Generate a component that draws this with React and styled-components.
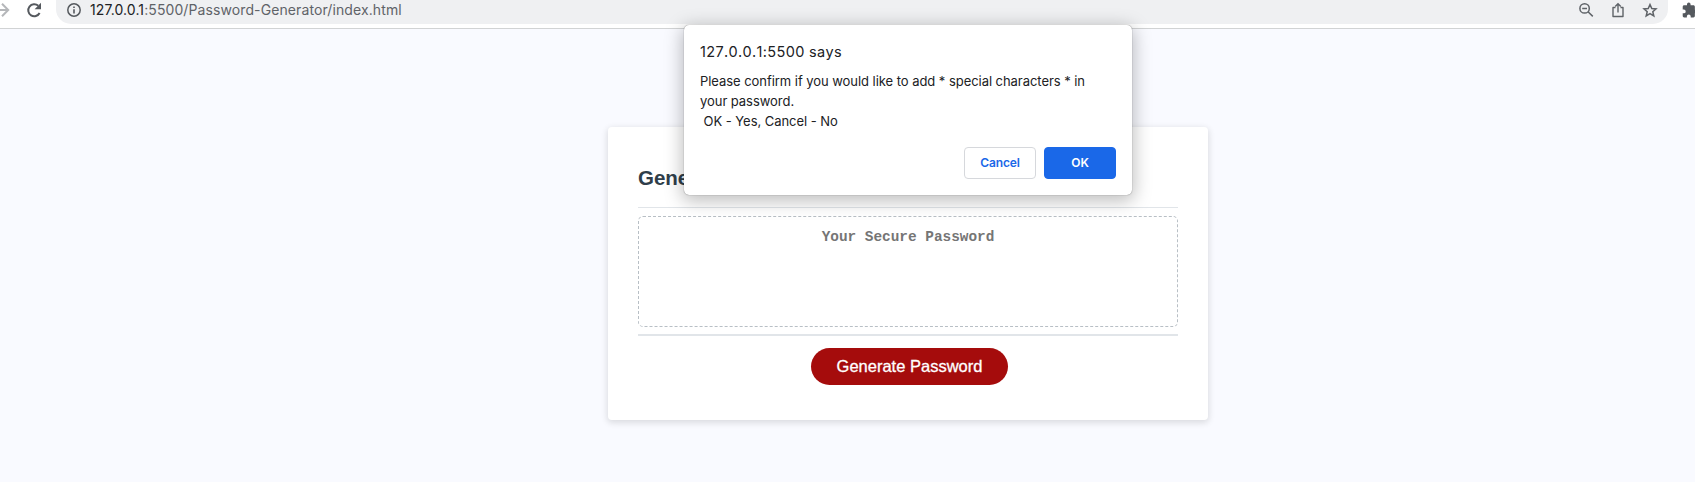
import React from "react";
import styled, { createGlobalStyle } from "styled-components";

const GlobalStyle = createGlobalStyle`
  *, *::before, *::after { box-sizing: border-box; }
  body {
    margin: 0;
    overflow: hidden;
    background: #f9faff;
    font-family: "Liberation Sans", Arial, sans-serif;
  }
`;

const Window = styled.div`
  height: 482px;
  overflow: hidden;
`;

const Toolbar = styled.header`
  display: flex;
  align-items: flex-start;
  height: 29px;
  background: #fff;
  border-bottom: 1px solid #d1d3d4;
`;

const Icon = styled.svg`
  display: block;
  flex: none;
  width: ${(p) => p.$w || 20}px;
  height: 20px;
  overflow: visible;
`;

const NavButtons = styled.nav`
  display: flex;
  gap: 14px;
  width: 56px;
  flex: none;
`;

const AddressBar = styled.div`
  display: flex;
  flex: none;
  align-items: flex-start;
  width: 1612px;
  height: 24px;
  padding: 0 8px;
  background: #eff0f2;
  border-radius: 0 0 15px 15px;
`;

const Url = styled.span`
  flex: 1;
  margin-left: 6px;
  font: 400 14px/20px Inter, sans-serif;
  letter-spacing: 0.1px;
  color: #5f6368;
  white-space: nowrap;
`;

const Host = styled.span`
  color: #202124;
`;

const Actions = styled.div`
  display: flex;
  gap: 12px;
`;

const Extensions = styled.div`
  flex: none;
  width: 13px;
  margin-left: 14px;
  overflow: hidden;
`;

const Page = styled.main`
  display: flex;
  justify-content: center;
  padding: 98px 0 0 121px;
`;

const Card = styled.section`
  width: 600px;
  height: 293px;
  padding: 37px 30px 0;
  background: #fff;
  border-radius: 4px;
  box-shadow: 0 2px 6px 1px rgba(0, 0, 0, 0.12);
`;

const CardTitle = styled.h2`
  margin: 0;
  height: 43px;
  font-size: 20.5px;
  line-height: 27px;
  color: #2f3e4a;
`;

const Divider = styled.div`
  height: ${(p) => p.$size}px;
  background: #e1e5e9;
`;

const PasswordBox = styled.div`
  height: 111px;
  margin: 8px 0 7px;
  padding-top: 11px;
  border: 1px dashed #b8bfc5;
  border-radius: 5px;
  font: 700 14.4px/18px "Liberation Mono", monospace;
  text-align: center;
  color: #757575;
`;

const GenerateButton = styled.button`
  display: block;
  width: 197px;
  height: 37px;
  margin: 12px 0 0 173px;
  padding: 0;
  border: 0;
  border-radius: 19px;
  background: #a50c0c;
  color: #fff;
  font: 400 16.5px/37px "Liberation Sans", Arial, sans-serif;
  -webkit-text-stroke: 0.3px #fff;
`;

const Dialog = styled.div`
  position: absolute;
  left: 684px;
  top: 25px;
  width: 448px;
  height: 170px;
  padding: 16px;
  background: #fff;
  border-radius: 5px;
  box-shadow: 0 0 1px rgba(0, 0, 0, 0.6), 0 4px 18px 2px rgba(0, 0, 0, 0.26);
  font-family: Inter, sans-serif;
  color: #202124;
`;

const DialogTitle = styled.h1`
  margin: 0;
  font-size: 14.5px;
  font-weight: 400;
  font-kerning: none;
  line-height: 22px;
  letter-spacing: 0.35px;
`;

const Message = styled.p`
  margin: 8px 0 0;
  font-size: 13px;
  line-height: 20px;
  letter-spacing: -0.05px;
  white-space: pre;
`;

const DialogActions = styled.div`
  display: flex;
  justify-content: flex-end;
  gap: 8px;
  margin-top: 16px;
`;

const DialogButton = styled.button`
  width: 72px;
  height: 32px;
  padding: 0;
  border: 1px solid ${(p) => (p.$primary ? "#1a68e8" : "#d6d8dc")};
  border-radius: 4px;
  background: ${(p) => (p.$primary ? "#1a68e8" : "#fff")};
  color: ${(p) => (p.$primary ? "#fff" : "#1a68e8")};
  font: 600 12px/28px Inter, sans-serif;
  letter-spacing: -0.1px;
`;

export default function App() {
  return (
    <Window>
      <GlobalStyle />
      <Toolbar>
        <NavButtons>
          <Icon viewBox="0 0 10 20" $w={10} fill="none" stroke="#b5b7ba" strokeWidth="2">
            <path d="M-3 10H8M2 3.8L8.2 10L2 16.2" />
          </Icon>
          <Icon viewBox="0 0 20 20">
            <path d="M15.6 13A6 6 0 1 1 14.3 5.8" fill="none" stroke="#55595e" strokeWidth="2" />
            <path d="M17 2.8V9.2H10.6Z" fill="#55595e" />
          </Icon>
        </NavButtons>
        <AddressBar>
          <Icon viewBox="0 0 20 20">
            <circle cx="10" cy="10" r="6.2" fill="none" stroke="#55595e" strokeWidth="1.5" />
            <path d="M10 9.2V13.4M10 6.4V8" stroke="#55595e" strokeWidth="1.6" />
          </Icon>
          <Url><Host>127.0.0.1</Host>:5500/Password-Generator/index.html</Url>
          <Actions>
            <Icon viewBox="0 0 20 20" fill="none" stroke="#5f6368" strokeWidth="1.5">
              <circle cx="8.6" cy="8.4" r="4.7" />
              <path d="M6.2 8.4H11M12 11.8L16.8 16.4" />
            </Icon>
            <Icon viewBox="0 0 20 20" fill="none" stroke="#5f6368" strokeWidth="1.4">
              <path d="M7.5 7.5H5V16.5H15V7.5H12.5" strokeLinejoin="round" />
              <path d="M10 12.5V4M7.2 6.6L10 3.8L12.8 6.6" />
            </Icon>
            <Icon viewBox="0 0 20 20" fill="none" stroke="#5f6368" strokeWidth="1.5">
              <path d="M10 4.6L11.8 8.5L16 8.9L12.8 11.7L13.8 16L10 13.7L6.2 16L7.2 11.7L4 8.9L8.2 8.5Z" />
            </Icon>
          </Actions>
        </AddressBar>
        <Extensions>
          <Icon viewBox="1 -2.5 28 28" fill="#55595e">
            <path d="M20.5 11H19V7c0-1.1-.9-2-2-2h-4V3.5a2.5 2.5 0 0 0-5 0V5H4c-1.1 0-2 .9-2 2v3.8h1.5a2.7 2.7 0 0 1 0 5.4H2V20c0 1.1.9 2 2 2h3.8v-1.5a2.7 2.7 0 0 1 5.4 0V22H17c1.1 0 2-.9 2-2v-4h1.5a2.5 2.5 0 0 0 0-5z" />
          </Icon>
        </Extensions>
      </Toolbar>
      <Page>
        <Card>
          <CardTitle>Generate a Password</CardTitle>
          <Divider $size={1} />
          <PasswordBox>Your Secure Password</PasswordBox>
          <Divider $size={2} />
          <GenerateButton>Generate Password</GenerateButton>
        </Card>
      </Page>
      <Dialog role="dialog">
        <DialogTitle>127.0.0.1:5500 says</DialogTitle>
        <Message>{"Please confirm if you would like to add * special characters * in\nyour password.\n OK - Yes, Cancel - No"}</Message>
        <DialogActions>
          <DialogButton>Cancel</DialogButton>
          <DialogButton $primary>OK</DialogButton>
        </DialogActions>
      </Dialog>
    </Window>
  );
}
